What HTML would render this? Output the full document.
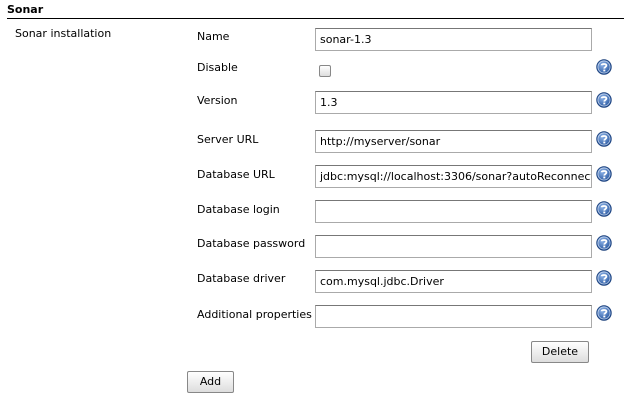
<!DOCTYPE html>
<html><head><meta charset="utf-8"><style>
body{margin:0;width:624px;height:401px;background:#fff;font-family:Verdana,"DejaVu Sans",sans-serif;font-size:11px;color:#000;position:relative;overflow:hidden}
.a{position:absolute;white-space:nowrap}
.in{position:absolute;left:315px;width:275px;height:21px;border:1px solid #aaa;border-top-color:#777;background:#fff;box-sizing:content-box;overflow:hidden}
.in span{position:absolute;left:4px;top:4px;font-size:11px;white-space:nowrap}
.h{position:absolute;left:596px;width:16px;height:16px}
.btn{position:absolute;border:1px solid #888;border-radius:2px;background:linear-gradient(#fff,#ddd);font-size:11px;text-align:center;line-height:20px}
</style></head><body>
<div class="a" style="left:7px;top:3px;font-weight:bold;font-size:11px">Sonar</div>
<div class="a" style="left:7px;top:18px;width:617px;height:1px;background:#000"></div>
<div class="a" style="left:15px;top:27px">Sonar installation</div>

<div class="a" style="left:197px;top:30px">Name</div>
<div class="in" style="top:28px"><span>sonar-1.3</span></div>

<div class="a" style="left:197px;top:61px">Disable</div>
<div class="a" style="left:319px;top:65px;width:10px;height:10px;border:1px solid #888;border-radius:2px;background:linear-gradient(#fff,#ddd)"></div>

<div class="a" style="left:197px;top:94px">Version</div>
<div class="in" style="top:91px"><span>1.3</span></div>

<div class="a" style="left:197px;top:133px">Server URL</div>
<div class="in" style="top:130px"><span>http://myserver/sonar</span></div>

<div class="a" style="left:197px;top:168px">Database URL</div>
<div class="in" style="top:165px"><span>jdbc:mysql://localhost:3306/sonar?autoReconnect=true</span></div>

<div class="a" style="left:197px;top:203px">Database login</div>
<div class="in" style="top:200px"></div>

<div class="a" style="left:197px;top:237px">Database password</div>
<div class="in" style="top:235px"></div>

<div class="a" style="left:197px;top:272px">Database driver</div>
<div class="in" style="top:270px"><span>com.mysql.jdbc.Driver</span></div>

<div class="a" style="left:197px;top:308px">Additional properties</div>
<div class="in" style="top:305px"></div>

<svg width="0" height="0" style="position:absolute"><defs><radialGradient id="g" cx="40%" cy="35%" r="70%"><stop offset="0" stop-color="#8fb4e8"/><stop offset="1" stop-color="#1f4f9a"/></radialGradient>
<symbol id="q" viewBox="0 0 16 16"><circle cx="8" cy="8" r="7.3" fill="url(#g)" stroke="#1a3f7a" stroke-width="0.8"/><circle cx="8" cy="8" r="6" fill="none" stroke="#fff" stroke-width="0.7" opacity=".7"/><path d="M5.6 6.3C5.6 4.6 10.4 4.4 10.4 6.6 10.4 8 8.3 8 8.3 9.6" fill="none" stroke="#fff" stroke-width="1.8"/><rect x="7.3" y="10.6" width="2" height="1.8" fill="#fff"/></symbol></defs></svg>
<svg class="h" style="top:59px"><use href="#q"/></svg>
<svg class="h" style="top:92px"><use href="#q"/></svg>
<svg class="h" style="top:131px"><use href="#q"/></svg>
<svg class="h" style="top:166px"><use href="#q"/></svg>
<svg class="h" style="top:201px"><use href="#q"/></svg>
<svg class="h" style="top:235px"><use href="#q"/></svg>
<svg class="h" style="top:270px"><use href="#q"/></svg>
<svg class="h" style="top:305px"><use href="#q"/></svg>

<div class="btn" style="left:531px;top:341px;width:56px;height:20px">Delete</div>
<div class="btn" style="left:187px;top:371px;width:45px;height:20px">Add</div>
</body></html>
